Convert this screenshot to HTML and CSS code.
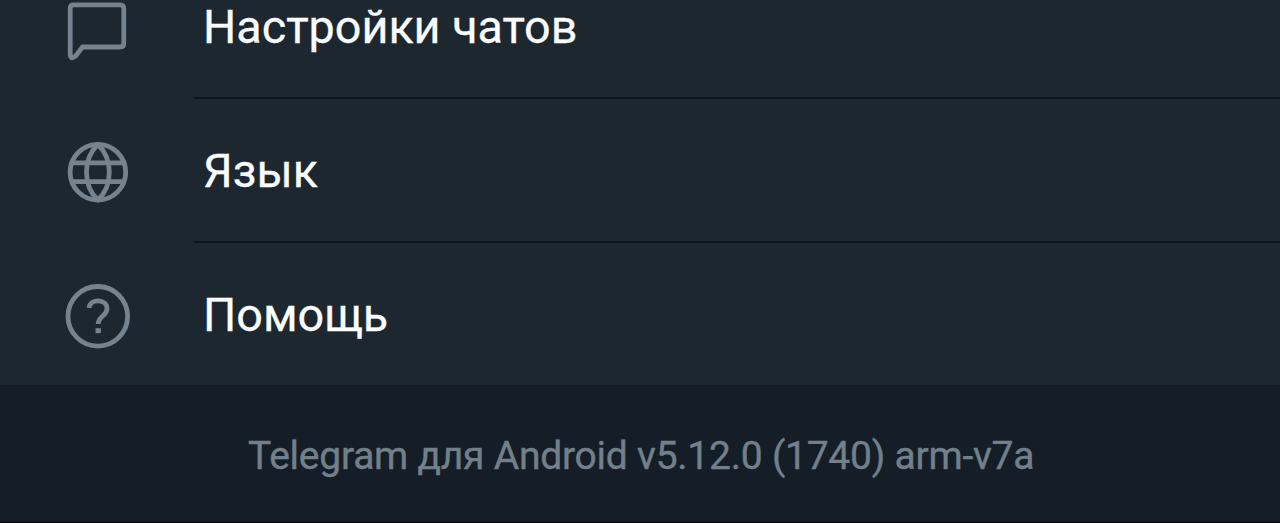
FILE: index.html
```html
<!DOCTYPE html>
<html lang="ru">
<head>
    <meta charset="UTF-8">
    <meta name="viewport" content="width=device-width, initial-scale=1.0">
    <title>Настройки</title>

    <link rel="stylesheet" href="styles.css">
</head>
<body>
    <main class="menu">
        <a class="item">
            <svg class="icon" viewBox="0 0 72 72">
                <path d="M13.5 13.8H60Q63.8 13.8 63.8 17.6V52.2Q63.8 56 60 56H22.5L15.8 64.9Q10.2 69.5 10.2 63V17.3Q10.2 13.8 13.5 13.8Z"/>
            </svg>
            <span class="label">Настройки чатов</span>
        </a>
        <a class="item">
            <svg class="icon" viewBox="0 0 72 72">
                <circle cx="37.9" cy="37.2" r="27.8"/>
                <path d="M37.9 9.4C22.7 24 22.7 50.4 37.9 65C53.1 50.4 53.1 24 37.9 9.4Z"/>
                <path d="M11.7 27.8H64.1M11.7 46.6H64.1"/>
            </svg>
            <span class="label">Язык</span>
        </a>
        <a class="item">
            <svg class="icon" viewBox="0 0 72 72">
                <circle cx="37.8" cy="37.3" r="29.8"/>
                <path d="M29 29C30 19.3 47 19.5 47 29.7C47 37 38.2 37 38.2 45"/>
                <path class="dot" d="M35.5 49.2h5.4v5h-5.4z"/>
            </svg>
            <span class="label">Помощь</span>
        </a>
    </main>
    <footer>Telegram для Android v5.12.0 (1740) arm-v7a</footer>
</body>
</html>
```
FILE: styles.css
```css
body{
    margin: 0;
    height: 523px;
    overflow: hidden;
    display: flex;
    flex-direction: column;
    font-family: Roboto, sans-serif;
    background-color: #151e26;
}
.menu{
    margin-top: -45px;
    background-color: #1c2730;
}
.item{
    display: flex;
    height: 144px;
}
.item:last-child{
    height: 142px;
}
.icon{
    width: 72px;
    height: 72px;
    margin: 36px 62px 0 60px;
    fill: none;
    stroke: #75838e;
    stroke-width: 4.8;
    stroke-linecap: butt;
    stroke-linejoin: round;
}
.icon .dot{
    fill: #75838e;
    stroke: none;
}
.label{
    flex: 1;
    box-sizing: border-box;
    padding: 1px 0 0 9px;
    border-bottom: 2px solid #0e151c;
    line-height: 142px;
    font-size: 46.7px;
    color: #fbfcfd;
    -webkit-text-stroke: 0.3px #fbfcfd;
}
.item:last-child .label{
    border-bottom: 0;
}
footer{
    box-sizing: border-box;
    height: 138px;
    padding-left: 248px;
    border-bottom: 1px solid #000;
    line-height: 143px;
    font-size: 39px;
    letter-spacing: -0.24px;
    color: #72808b;
    -webkit-text-stroke: 0.4px #72808b;
}
```
